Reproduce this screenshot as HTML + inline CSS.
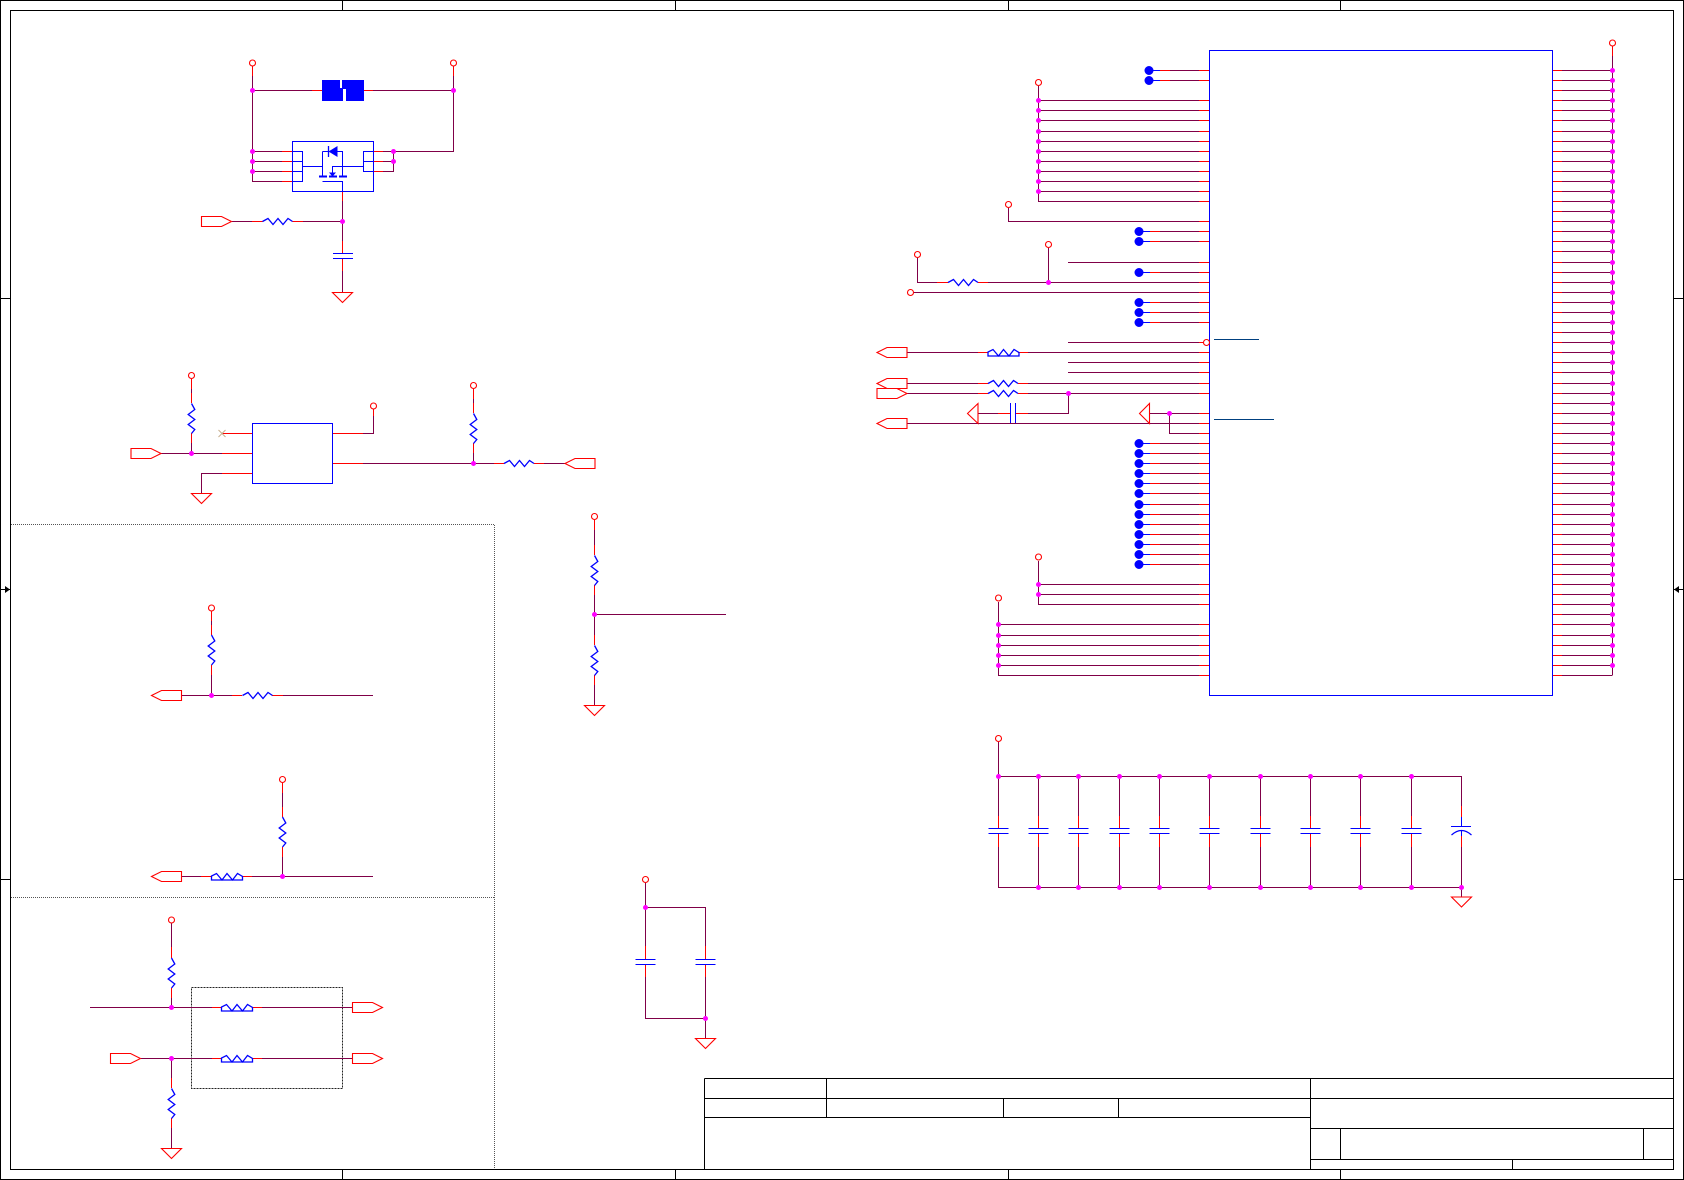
<!DOCTYPE html>
<html><head><meta charset="utf-8"><title>Schematic</title>
<style>html,body{margin:0;padding:0;background:#fff;width:1684px;height:1180px;overflow:hidden}svg{display:block}</style></head>
<body>
<svg xmlns="http://www.w3.org/2000/svg" width="1684" height="1180" viewBox="0 0 1684 1180" fill="none">
<defs>
<path id="rh" d="M0 0L5.5 -3L10.5 3L15.5 -3L20.5 3L25.5 -3L30 0" stroke="#00f" stroke-width="1.3"/>
<path id="rv" d="M0 0L3.3 6L-3.3 11L3.3 16L-3.3 21L3.3 26L0 30" stroke="#00f" stroke-width="1.3"/>
<path id="ind" d="M0 3.5V-.5L5 -3L10.5 3.5L15.5 -3L21 3.5L26 -3L31 0V3.5Z" stroke="#00f" stroke-width="1.3"/>
<path id="gnd" d="M-10 0H10L0 10Z" stroke="#f00" stroke-width="1.1" fill="#fff"/>
<path id="fr" d="M0 -5H20L30 0L20 5H0Z" stroke="#f00" stroke-width="1.1" fill="#fff"/>
<path id="fl" d="M0 0L10 -5H30V5H10Z" stroke="#f00" stroke-width="1.1" fill="#fff"/>
</defs>

<!-- frame -->
<g stroke="#000" stroke-width="1" shape-rendering="crispEdges">
<rect x="0.5" y="0.5" width="1683" height="1179"/>
<rect x="10.5" y="10.5" width="1663" height="1159"/>
<path d="M342.5 0V10M675.5 0V10M1008.5 0V10M1340.5 0V10M342.5 1170V1180M675.5 1170V1180M1008.5 1170V1180M1340.5 1170V1180M0 298.5H10M0 589.5H10M0 879.5H10M1674 298.5H1684M1674 589.5H1684M1674 879.5H1684"/>
<path d="M704.5 1078.5H1673M704.5 1078.5V1169M704.5 1098.5H1673M704.5 1117.5H1310.5M1310.5 1078.5V1169M826.5 1078.5V1117.5M1003.5 1098.5V1117.5M1118.5 1098.5V1117.5M1310.5 1128.5H1673M1340.5 1128.5V1159M1643.5 1128.5V1159M1310.5 1159.5H1673M1512.5 1159.5V1169"/>
</g>
<path d="M5 586L10 589.5L5 593ZM1679 586L1674 589.5L1679 593Z" fill="#000"/>

<!-- dashed -->
<g stroke="#555" stroke-width="1" stroke-dasharray="1 1" shape-rendering="crispEdges">
<path d="M11 524.5H494.5V1169"/>
<path d="M11 897.5H494.5"/>
<path d="M191.5 987.5H342.5V1088.5H191.5Z" stroke="#222" stroke-dasharray="2 1"/>
</g>

<!-- purple wires -->
<g stroke="#800048" stroke-width="1" shape-rendering="crispEdges">
<path d="M252.5 76V181.5H282M252.5 90.5H312M373 90.5H453.5M453.5 76V151.5H383M252.5 151.5H282M252.5 161.5H282M252.5 171.5H282M383 161.5H393.5M383 171.5H393.5V151.5M232 221.5H252M303 221.5H342.5M342.5 201V241M342.5 271V292"/>
<path d="M191.5 389V393M191.5 443V453.5M161 453.5H222M222 473.5H201.5V493M363 433.5H373.5V416M363 463.5H494M544 463.5H565M473.5 399V403M473.5 453V463"/>
<path d="M594.5 530V545M594.5 595V635M594.5 685V705M595 614.5H726"/>
<path d="M211.5 621V625M211.5 675V695M181 695.5H232M283 695.5H373M282.5 793V807M282.5 857V876M181 876.5H201M252 876.5H373"/>
<path d="M171.5 923V947M171.5 998V1007M90 1007.5H212M262 1007.5H352M141 1058.5H212M262 1058.5H352M171.5 1058V1078M171.5 1128V1148"/>
<path d="M645.5 883V946M645.5 907.5H705.5V946M645.5 977V1018.5H705.5M705.5 977V1038"/>
<path d="M998.5 742V816M998.5 776.5H1461.5V806M998.5 847V887.5H1461.5V897M1038.5 776V816M1038.5 847V887M1078.5 776V816M1078.5 847V887M1119.5 776V816M1119.5 847V887M1159.5 776V816M1159.5 847V887M1209.5 776V816M1209.5 847V887M1260.5 776V816M1260.5 847V887M1310.5 776V816M1310.5 847V887M1360.5 776V816M1360.5 847V887M1411.5 776V816M1411.5 847V887M1461.5 847V887"/>
<path d="M1612.5 52V675.5M1562 70.5h50M1562 80.5h50M1562 90.5h50M1562 100.5h50M1562 110.5h50M1562 120.5h50M1562 131.5h50M1562 141.5h50M1562 151.5h50M1562 161.5h50M1562 171.5h50M1562 181.5h50M1562 191.5h50M1562 201.5h50M1562 211.5h50M1562 221.5h50M1562 231.5h50M1562 241.5h50M1562 251.5h50M1562 262.5h50M1562 272.5h50M1562 282.5h50M1562 292.5h50M1562 302.5h50M1562 312.5h50M1562 322.5h50M1562 332.5h50M1562 342.5h50M1562 352.5h50M1562 362.5h50M1562 372.5h50M1562 383.5h50M1562 393.5h50M1562 403.5h50M1562 413.5h50M1562 423.5h50M1562 433.5h50M1562 443.5h50M1562 453.5h50M1562 463.5h50M1562 473.5h50M1562 483.5h50M1562 493.5h50M1562 504.5h50M1562 514.5h50M1562 524.5h50M1562 534.5h50M1562 544.5h50M1562 554.5h50M1562 564.5h50M1562 574.5h50M1562 584.5h50M1562 594.5h50M1562 604.5h50M1562 614.5h50M1562 624.5h50M1562 635.5h50M1562 645.5h50M1562 655.5h50M1562 665.5h50M1562 675.5h50"/>
<path d="M1170 70.5H1199M1170 80.5H1199M1038.5 86V201.5M1038 100.5H1199M1038 110.5H1199M1038 120.5H1199M1038 131.5H1199M1038 141.5H1199M1038 151.5H1199M1038 161.5H1199M1038 171.5H1199M1038 181.5H1199M1038 191.5H1199M1038 201.5H1199M1008.5 208V221.5H1199M1160 231.5H1199M1160 241.5H1199M1068 262.5H1199M1160 272.5H1199M917.5 258V282.5H937M988 282.5H1199M1048.5 248V282.5M914 292.5H1199M1160 302.5H1199M1160 312.5H1199M1160 322.5H1199M1068 342.5H1199M907 352.5H978M1028 352.5H1199M1068 362.5H1199M1068 372.5H1199M907 383.5H978M1028 383.5H1199M907 393.5H978M1028 393.5H1199M1068.5 393.5V413.5H1028M978 413.5H998M1150 413.5H1199M1169.5 413.5V433.5H1199M907 423.5H1199"/>
<path d="M1160 443.5H1199M1160 453.5H1199M1160 463.5H1199M1160 473.5H1199M1160 483.5H1199M1160 493.5H1199M1160 504.5H1199M1160 514.5H1199M1160 524.5H1199M1160 534.5H1199M1160 544.5H1199M1160 554.5H1199M1160 564.5H1199M1038.5 561V604.5H1199M1038 584.5H1199M1038 594.5H1199M998.5 602V675.5H1199M998 624.5H1199M998 635.5H1199M998 645.5H1199M998 655.5H1199M998 665.5H1199"/>
</g>

<!-- red stubs -->
<g stroke="#f00" stroke-width="1" shape-rendering="crispEdges">
<path d="M252.5 66V76M453.5 66V76M312 90.5H322M364 90.5H373M282 151.5H292M282 161.5H292M282 171.5H292M282 181.5H292M373 151.5H383M373 161.5H383M373 171.5H383M342.5 191V201M342.5 241V253M342.5 258V271M252 221.5H262.5M292.5 221.5H303"/>
<path d="M191.5 379V389M191.5 393V403M191.5 433V443M222 453.5H252M222 433.5H252M222 473.5H252M332 433.5H363M332 463.5H363M373.5 409V416M494 463.5H504M534 463.5H544M473.5 389V399M473.5 403V413M473.5 443V453"/>
<path d="M594.5 520V530M594.5 545V555M594.5 585V595M594.5 635V645M594.5 675V685"/>
<path d="M211.5 611V621M211.5 625V635M211.5 665V675M232 695.5H242M272 695.5H283M282.5 783V793M282.5 807V817M282.5 847V857M201 876.5H211M242 876.5H252"/>
<path d="M171.5 947V958M171.5 988V998M212 1007.5H222M252 1007.5H262M212 1058.5H222M252 1058.5H262M171.5 1078V1088M171.5 1118V1128"/>
<path d="M645.5 946V959M645.5 965V977M705.5 946V959M705.5 965V977"/>
<path d="M998.5 816V828M998.5 833V847M1038.5 816V828M1038.5 833V847M1078.5 816V828M1078.5 833V847M1119.5 816V828M1119.5 833V847M1159.5 816V828M1159.5 833V847M1209.5 816V828M1209.5 833V847M1260.5 816V828M1260.5 833V847M1310.5 816V828M1310.5 833V847M1360.5 816V828M1360.5 833V847M1411.5 816V828M1411.5 833V847M1461.5 806V817M1461.5 836V847"/>
<path d="M1612.5 46V56M1552 70.5h10M1552 80.5h10M1552 90.5h10M1552 100.5h10M1552 110.5h10M1552 120.5h10M1552 131.5h10M1552 141.5h10M1552 151.5h10M1552 161.5h10M1552 171.5h10M1552 181.5h10M1552 191.5h10M1552 201.5h10M1552 211.5h10M1552 221.5h10M1552 231.5h10M1552 241.5h10M1552 251.5h10M1552 262.5h10M1552 272.5h10M1552 282.5h10M1552 292.5h10M1552 302.5h10M1552 312.5h10M1552 322.5h10M1552 332.5h10M1552 342.5h10M1552 352.5h10M1552 362.5h10M1552 372.5h10M1552 383.5h10M1552 393.5h10M1552 403.5h10M1552 413.5h10M1552 423.5h10M1552 433.5h10M1552 443.5h10M1552 453.5h10M1552 463.5h10M1552 473.5h10M1552 483.5h10M1552 493.5h10M1552 504.5h10M1552 514.5h10M1552 524.5h10M1552 534.5h10M1552 544.5h10M1552 554.5h10M1552 564.5h10M1552 574.5h10M1552 584.5h10M1552 594.5h10M1552 604.5h10M1552 614.5h10M1552 624.5h10M1552 635.5h10M1552 645.5h10M1552 655.5h10M1552 665.5h10M1552 675.5h10"/>
<path d="M1199 70.5h10M1199 80.5h10M1199 100.5h10M1199 110.5h10M1199 120.5h10M1199 131.5h10M1199 141.5h10M1199 151.5h10M1199 161.5h10M1199 171.5h10M1199 181.5h10M1199 191.5h10M1199 201.5h10M1199 221.5h10M1199 231.5h10M1199 241.5h10M1199 262.5h10M1199 272.5h10M1199 282.5h10M1199 292.5h10M1199 302.5h10M1199 312.5h10M1199 322.5h10M1199 342.5h5M1199 352.5h10M1199 362.5h10M1199 372.5h10M1199 383.5h10M1199 393.5h10M1199 413.5h10M1199 423.5h10M1199 433.5h10M1199 443.5h10M1199 453.5h10M1199 463.5h10M1199 473.5h10M1199 483.5h10M1199 493.5h10M1199 504.5h10M1199 514.5h10M1199 524.5h10M1199 534.5h10M1199 544.5h10M1199 554.5h10M1199 564.5h10M1199 584.5h10M1199 594.5h10M1199 604.5h10M1199 624.5h10M1199 635.5h10M1199 645.5h10M1199 655.5h10M1199 665.5h10M1199 675.5h10"/>
<path d="M1160 70.5h10M1160 80.5h10M1150 231.5h10M1150 241.5h10M1150 272.5h10M1150 302.5h10M1150 312.5h10M1150 322.5h10M1150 443.5h10M1150 453.5h10M1150 463.5h10M1150 473.5h10M1150 483.5h10M1150 493.5h10M1150 504.5h10M1150 514.5h10M1150 524.5h10M1150 534.5h10M1150 544.5h10M1150 554.5h10M1150 564.5h10"/>
<path d="M937 282.5H948M978 282.5H988M978 352.5H988M1018 352.5H1028M978 383.5H988M1018 383.5H1028M978 393.5H988M1018 393.5H1028M998 413.5H1010M1016 413.5H1028"/>
</g>

<!-- blue components -->
<g stroke="#00f" stroke-width="1" shape-rendering="crispEdges">
<rect x="1209.5" y="50.5" width="343" height="645"/>
<rect x="292.5" y="141.5" width="81" height="50"/>
<rect x="292.5" y="151.5" width="10" height="30"/>
<path d="M292.5 161.5H302M292.5 171.5H302"/>
<rect x="363.5" y="151.5" width="10" height="20"/>
<path d="M364 161.5H373"/>
<path d="M302 166.5H322.5M322.5 151.5V176M322.5 151.5H342.5V176M332.5 176V166.5H363M322.5 181.5H342.5V191"/>
<rect x="252.5" y="423.5" width="80" height="60"/>
<path d="M333 253.5H353M333 258.5H353"/>
<path d="M635.5 959.5H655.5M635.5 964.5H655.5M695.5 959.5H715.5M695.5 964.5H715.5"/>
<path d="M988.5 828.5H1008.5M988.5 833.5H1008.5M1028.5 828.5H1048.5M1028.5 833.5H1048.5M1068.5 828.5H1088.5M1068.5 833.5H1088.5M1109.5 828.5H1129.5M1109.5 833.5H1129.5M1149.5 828.5H1169.5M1149.5 833.5H1169.5M1199.5 828.5H1219.5M1199.5 833.5H1219.5M1250.5 828.5H1270.5M1250.5 833.5H1270.5M1300.5 828.5H1320.5M1300.5 833.5H1320.5M1350.5 828.5H1370.5M1350.5 833.5H1370.5M1401.5 828.5H1421.5M1401.5 833.5H1421.5M1461.5 817V826M1451 826.5H1471M1461.5 831V836"/>
<path d="M1010.5 403V423M1015.5 403V423"/>
<path d="M1149 70.5h11M1149 80.5h11M1139 231.5h11M1139 241.5h11M1139 272.5h11M1139 302.5h11M1139 312.5h11M1139 322.5h11M1139 443.5h11M1139 453.5h11M1139 463.5h11M1139 473.5h11M1139 483.5h11M1139 493.5h11M1139 504.5h11M1139 514.5h11M1139 524.5h11M1139 534.5h11M1139 544.5h11M1139 554.5h11M1139 564.5h11"/>
</g>
<path d="M1451.5 835Q1461.5 826 1471.5 835" stroke="#00f" stroke-width="1.2"/>
<path d="M1214 339.5H1259M1214 419.5H1274" stroke="#004080" stroke-width="1" shape-rendering="crispEdges"/>

<!-- fuse -->
<path d="M322 80H340V88H343V101H322Z" fill="#00f" shape-rendering="crispEdges"/>
<path d="M342 80H364V101H346V89H342Z" fill="#00f" shape-rendering="crispEdges"/>

<!-- mosfet details -->
<path d="M328.5 151.5L337.5 146V157Z" fill="#00f"/>
<path d="M328.5 146V157" stroke="#00f" stroke-width="1.3"/>
<path d="M319 176.5H327M329 176.5H337M339 176.5H347" stroke="#00f" stroke-width="2" shape-rendering="crispEdges"/>
<path d="M329 172.5H336L332.5 176.5Z" fill="#00f"/>

<!-- symbols -->
<g>
<use href="#rh" x="262.5" y="221.5"/>
<use href="#rv" x="191.5" y="403.5"/>
<use href="#rv" x="473.5" y="413.5"/>
<use href="#rh" x="504" y="463.5"/>
<use href="#rv" x="594.5" y="555.5"/>
<use href="#rv" x="594.5" y="645.5"/>
<use href="#rv" x="211.5" y="635"/>
<use href="#rh" x="242.5" y="695.5"/>
<use href="#rv" x="282.5" y="817"/>
<use href="#ind" x="211.5" y="876.5"/>
<use href="#rv" x="171.5" y="958"/>
<use href="#ind" x="221.5" y="1007.5"/>
<use href="#ind" x="221.5" y="1058.5"/>
<use href="#rv" x="171.5" y="1088.5"/>
<use href="#rh" x="948" y="282.5"/>
<use href="#ind" x="988" y="352.5"/>
<use href="#rh" x="988" y="383.5"/>
<use href="#rh" x="988" y="393.5"/>

<use href="#gnd" x="342.5" y="292.5"/>
<use href="#gnd" x="201.5" y="493.5"/>
<use href="#gnd" x="594.5" y="705.5"/>
<use href="#gnd" x="171.5" y="1148.5"/>
<use href="#gnd" x="705.5" y="1038.5"/>
<use href="#gnd" x="1461.5" y="897"/>

<use href="#fr" x="201.5" y="221.5"/>
<use href="#fr" x="131" y="453.5"/>
<use href="#fr" x="352.5" y="1007.5"/>
<use href="#fr" x="352.5" y="1058.5"/>
<use href="#fr" x="110.5" y="1058.5"/>
<use href="#fr" x="877" y="393.5"/>
<use href="#fl" x="565" y="463.5"/>
<use href="#fl" x="151.5" y="695.5"/>
<use href="#fl" x="151.5" y="876.5"/>
<use href="#fl" x="877" y="352.5"/>
<use href="#fl" x="877" y="383.5"/>
<use href="#fl" x="877" y="423.5"/>
</g>
<path d="M967.5 413.5L978 403.5V423.5ZM1139.5 413.5L1149.5 403.5V423.5Z" stroke="#f00" stroke-width="1.1" fill="#fff"/>
<path d="M218.5 430L225.5 437M218.5 437L225.5 430" stroke="#c8b090" stroke-width="1"/>

<!-- open circles -->
<g stroke="#f00" stroke-width="1.1" fill="#fff">
<circle cx="252.5" cy="63" r="3"/><circle cx="453.5" cy="63" r="3"/>
<circle cx="191.5" cy="375.5" r="3"/><circle cx="373.5" cy="406" r="3"/><circle cx="473.5" cy="385.5" r="3"/>
<circle cx="594.5" cy="516.5" r="3"/><circle cx="211.5" cy="608" r="3"/><circle cx="282.5" cy="779.5" r="3"/>
<circle cx="171.5" cy="920" r="3"/><circle cx="645.5" cy="879.5" r="3"/><circle cx="998.5" cy="738.5" r="3"/>
<circle cx="1612.5" cy="43" r="3"/><circle cx="1038.5" cy="82.5" r="3"/><circle cx="1008.5" cy="204.5" r="3"/>
<circle cx="917.5" cy="254.5" r="3"/><circle cx="1048.5" cy="244.5" r="3"/><circle cx="910.5" cy="292.5" r="3"/>
<circle cx="1206.5" cy="342.5" r="3"/><circle cx="1038.5" cy="557" r="3"/><circle cx="998.5" cy="598" r="3"/>
</g>

<!-- blue dots -->
<path stroke="#00f" stroke-width="9" stroke-linecap="round" d="M1149 70.5h0M1149 80.5h0M1139 231.5h0M1139 241.5h0M1139 272.5h0M1139 302.5h0M1139 312.5h0M1139 322.5h0M1139 443.5h0M1139 453.5h0M1139 463.5h0M1139 473.5h0M1139 483.5h0M1139 493.5h0M1139 504.5h0M1139 514.5h0M1139 524.5h0M1139 534.5h0M1139 544.5h0M1139 554.5h0M1139 564.5h0"/>

<!-- junctions -->
<path stroke="#f0f" stroke-width="5" stroke-linecap="round" d="M252.5 90.5h0M453.5 90.5h0M252.5 151.5h0M252.5 161.5h0M252.5 171.5h0M393.5 151.5h0M393.5 161.5h0M342.5 221.5h0M191.5 453.5h0M473.5 463.5h0M594.5 614.5h0M211.5 695.5h0M282.5 876.5h0M171.5 1007.5h0M171.5 1058.5h0M645.5 907.5h0M705.5 1018.5h0M1048.5 282.5h0M1068.5 393.5h0M1169.5 413.5h0
M998.5 776.5h0M1038.5 776.5h0M1078.5 776.5h0M1119.5 776.5h0M1159.5 776.5h0M1209.5 776.5h0M1260.5 776.5h0M1310.5 776.5h0M1360.5 776.5h0M1411.5 776.5h0M1038.5 887.5h0M1078.5 887.5h0M1119.5 887.5h0M1159.5 887.5h0M1209.5 887.5h0M1260.5 887.5h0M1310.5 887.5h0M1360.5 887.5h0M1411.5 887.5h0M1461.5 887.5h0
M1038.5 100.5h0M1038.5 110.5h0M1038.5 120.5h0M1038.5 131.5h0M1038.5 141.5h0M1038.5 151.5h0M1038.5 161.5h0M1038.5 171.5h0M1038.5 181.5h0M1038.5 191.5h0M1038.5 584.5h0M1038.5 594.5h0M998.5 624.5h0M998.5 635.5h0M998.5 645.5h0M998.5 655.5h0M998.5 665.5h0
M1612.5 70.5h0M1612.5 80.5h0M1612.5 90.5h0M1612.5 100.5h0M1612.5 110.5h0M1612.5 120.5h0M1612.5 131.5h0M1612.5 141.5h0M1612.5 151.5h0M1612.5 161.5h0M1612.5 171.5h0M1612.5 181.5h0M1612.5 191.5h0M1612.5 201.5h0M1612.5 211.5h0M1612.5 221.5h0M1612.5 231.5h0M1612.5 241.5h0M1612.5 251.5h0M1612.5 262.5h0M1612.5 272.5h0M1612.5 282.5h0M1612.5 292.5h0M1612.5 302.5h0M1612.5 312.5h0M1612.5 322.5h0M1612.5 332.5h0M1612.5 342.5h0M1612.5 352.5h0M1612.5 362.5h0M1612.5 372.5h0M1612.5 383.5h0M1612.5 393.5h0M1612.5 403.5h0M1612.5 413.5h0M1612.5 423.5h0M1612.5 433.5h0M1612.5 443.5h0M1612.5 453.5h0M1612.5 463.5h0M1612.5 473.5h0M1612.5 483.5h0M1612.5 493.5h0M1612.5 504.5h0M1612.5 514.5h0M1612.5 524.5h0M1612.5 534.5h0M1612.5 544.5h0M1612.5 554.5h0M1612.5 564.5h0M1612.5 574.5h0M1612.5 584.5h0M1612.5 594.5h0M1612.5 604.5h0M1612.5 614.5h0M1612.5 624.5h0M1612.5 635.5h0M1612.5 645.5h0M1612.5 655.5h0M1612.5 665.5h0"/>
</svg>
</body></html>
